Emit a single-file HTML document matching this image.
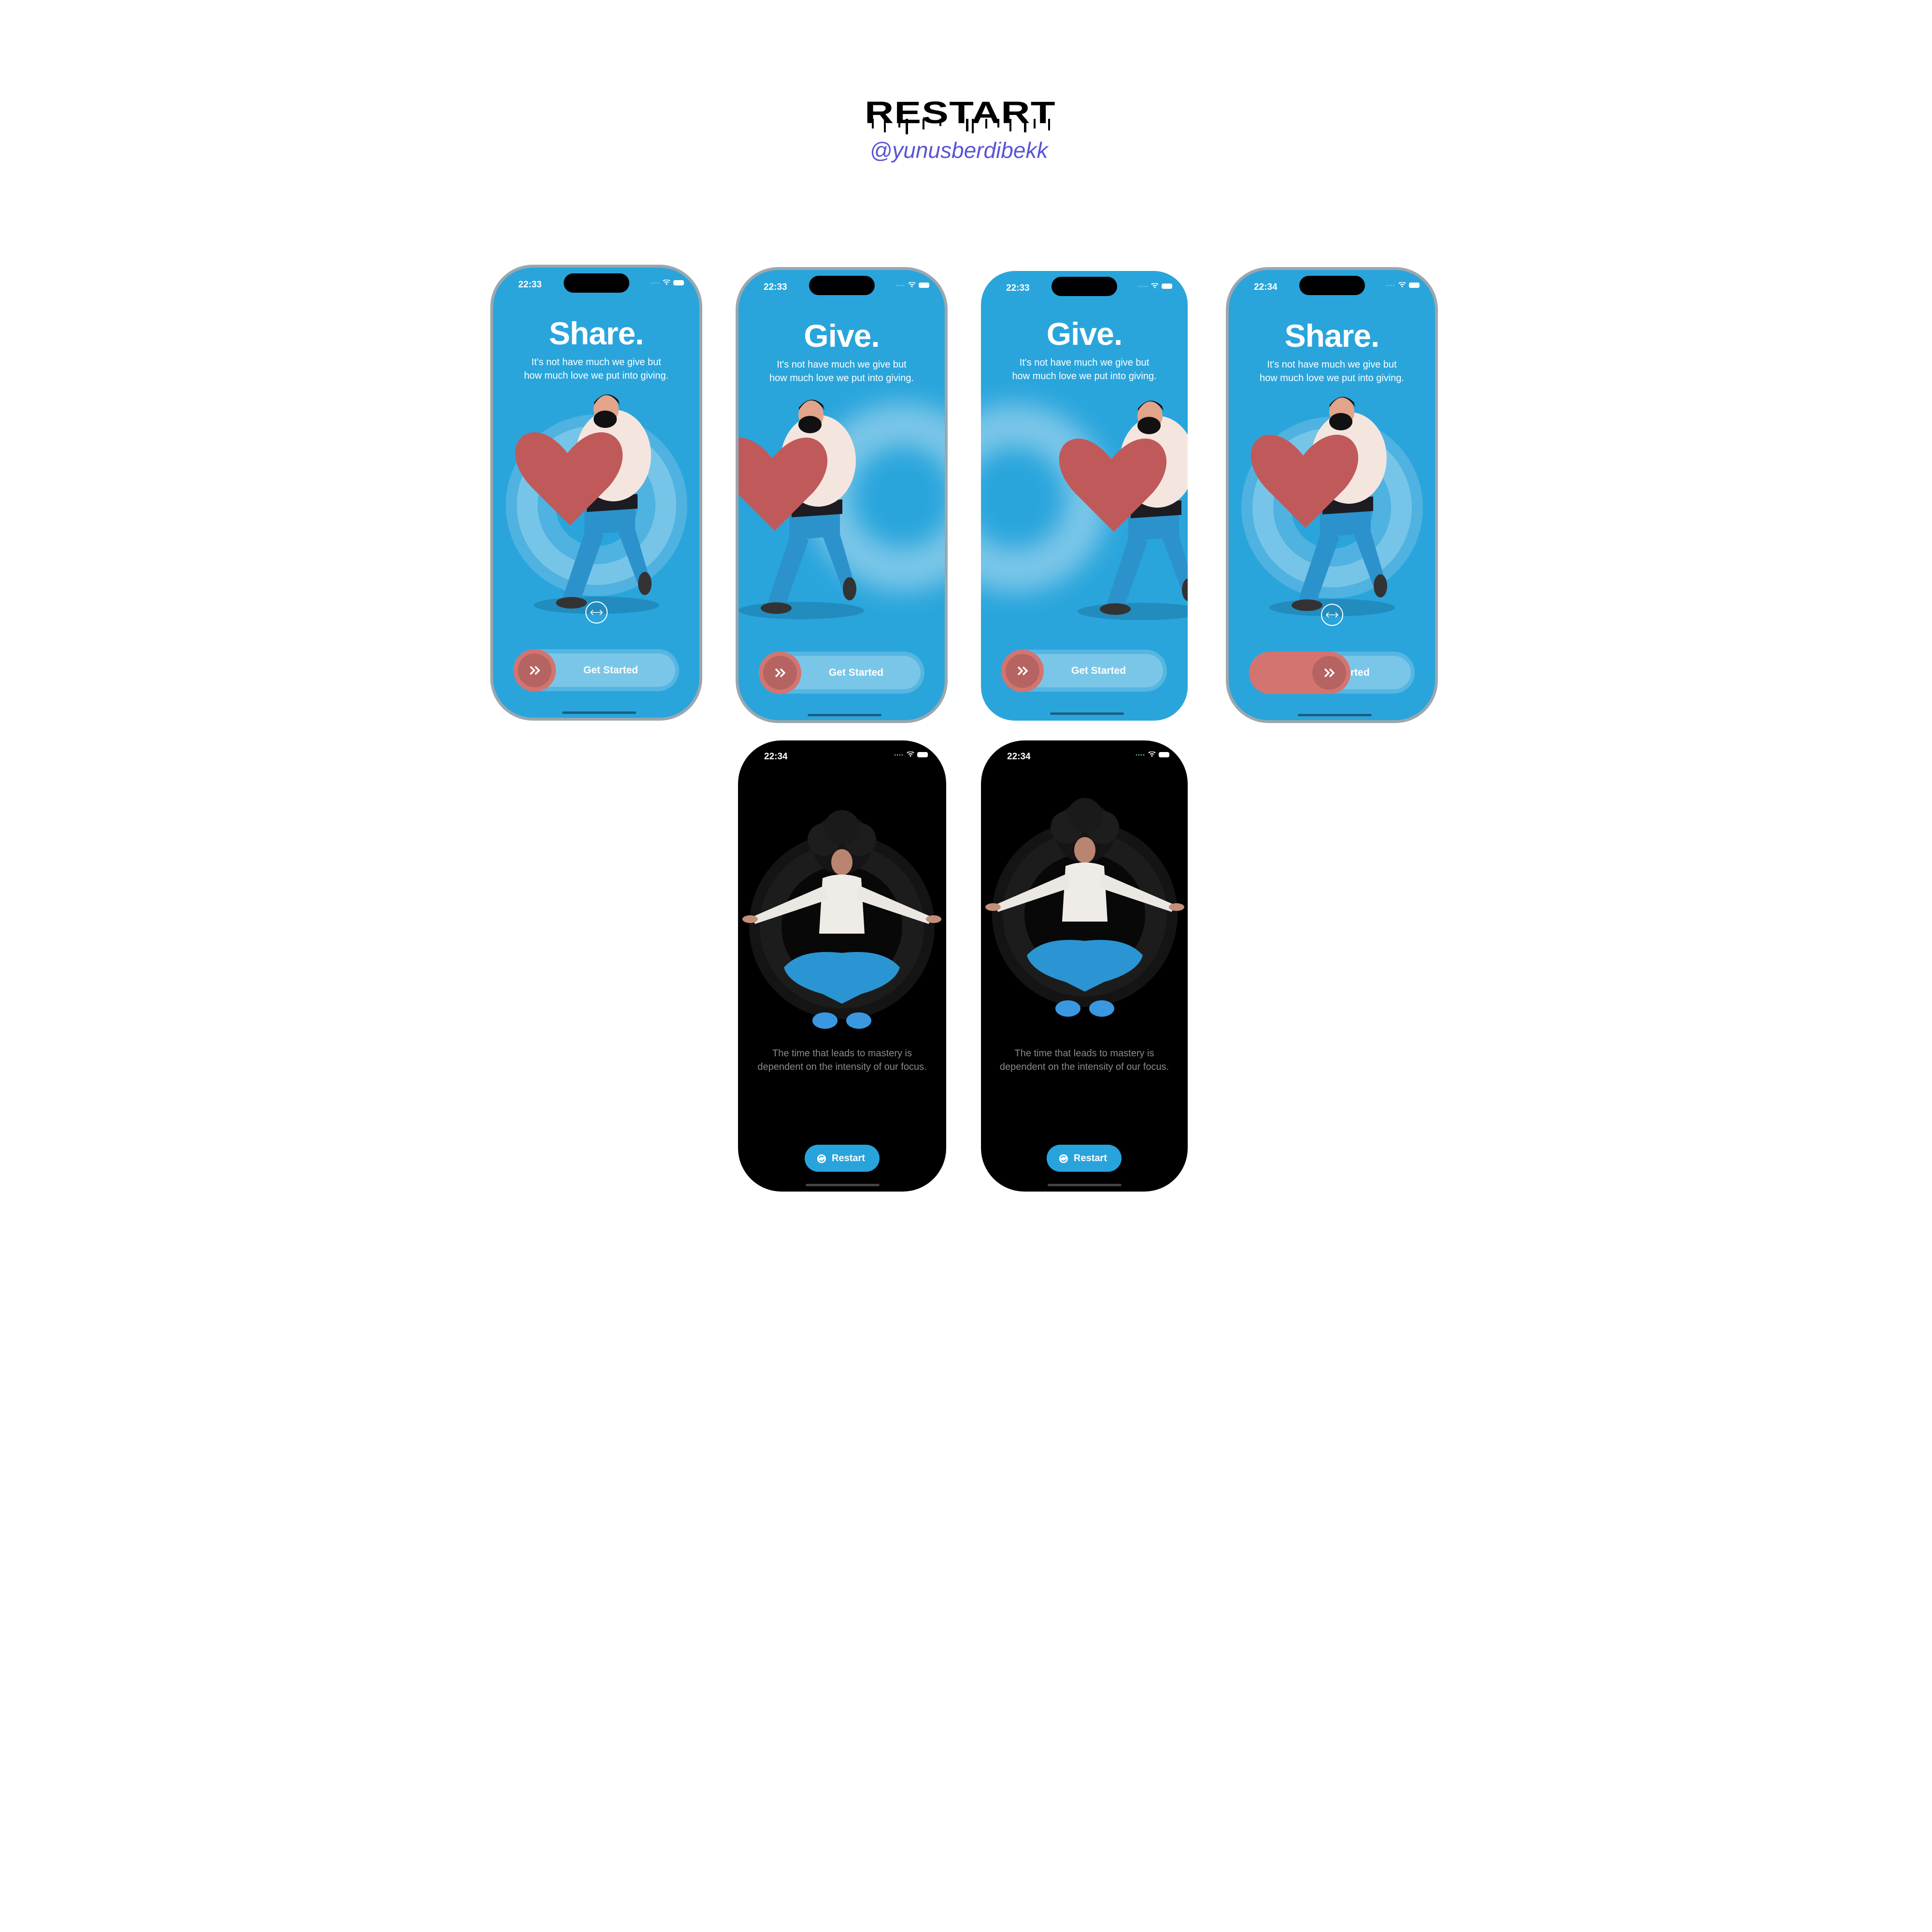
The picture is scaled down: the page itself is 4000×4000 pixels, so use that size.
<!DOCTYPE html>
<html><head><meta charset="utf-8"><style>
*{margin:0;padding:0;box-sizing:border-box}
body{width:4000px;height:4000px;background:#fff;position:relative;overflow:hidden;font-family:"Liberation Sans",sans-serif}
.abs{position:absolute}
.ph{position:absolute;width:439px;height:944px;border-radius:88px;background:#9aa7ae;padding:6px}
.scr{position:relative;width:100%;height:100%;border-radius:82px;background:#29a5dc;overflow:hidden}
.time{position:absolute;left:52px;top:25px;font-size:19px;font-weight:bold;color:#fff}
.isl{position:absolute;left:146px;top:12px;width:136px;height:40px;border-radius:20px;background:#000}
.stat{position:absolute;right:30px;top:25px}
.ttl{position:absolute;left:0;right:0;top:98px;text-align:center;color:#fff;font-weight:bold;font-size:66px;letter-spacing:-1px}
.sub{position:absolute;left:0;right:0;top:182px;text-align:center;color:#fff;font-size:20px;line-height:28px}
.track{position:absolute;left:42px;top:790px;width:343px;height:87px;border-radius:44px;background:#56b6e2}
.track i{position:absolute;left:8px;right:8px;top:9px;bottom:9px;border-radius:36px;background:#7ac6e8}
.gs{position:absolute;left:80px;right:20px;top:0;line-height:87px;text-align:center;color:#fff;font-weight:bold;font-size:21px}
.knob{position:absolute;width:88px;height:88px;border-radius:50%;background:#d47470;top:790px}
.knob b{position:absolute;left:9px;top:9px;width:70px;height:70px;border-radius:50%;background:#b56462}
.home{position:absolute;left:143px;top:919px;width:153px;height:5px;border-radius:3px;background:#1d5e80}
</style></head><body>

<div class="abs" style="left:1793px;top:196px;width:390px;text-align:center;font-size:64px;font-weight:900;color:#000;transform:scaleX(1.3);transform-origin:center;letter-spacing:1px">RESTART</div>
<svg class="abs" style="left:1800px;top:246px" width="380" height="35"><g fill="#000">
<rect x="5" y="0" width="4" height="20"/><rect x="30" y="0" width="4" height="28"/><rect x="60" y="0" width="4" height="18"/><rect x="75" y="0" width="5" height="32"/><rect x="110" y="0" width="4" height="22"/><rect x="145" y="0" width="4" height="15"/><rect x="200" y="0" width="5" height="26"/><rect x="212" y="0" width="4" height="30"/><rect x="240" y="0" width="4" height="20"/><rect x="265" y="0" width="4" height="18"/><rect x="290" y="0" width="4" height="26"/><rect x="320" y="0" width="5" height="28"/><rect x="340" y="0" width="4" height="20"/><rect x="370" y="0" width="4" height="24"/></g></svg>
<div class="abs" style="left:1795px;top:284px;width:380px;text-align:center;font-size:46px;font-style:italic;color:#5a55d6;letter-spacing:0px">@yunusberdibekk</div>

<svg width="0" height="0" style="position:absolute"><defs>
<filter id="bl" x="-60%" y="-60%" width="220%" height="220%"><feGaussianBlur stdDeviation="25"/></filter>
<g id="man">
<ellipse cx="220" cy="705" rx="130" ry="18" fill="#1a6f9a" opacity=".45"/>
<path d="M200 540 L150 690 L185 700 L235 560Z" fill="#2c92cc"/>
<path d="M260 540 L305 660 L330 650 L295 530Z" fill="#2c92cc"/>
<ellipse cx="168" cy="700" rx="32" ry="12" fill="#333"/>
<ellipse cx="320" cy="660" rx="14" ry="24" fill="#333"/>
<path d="M195 490 L300 490 L300 550 L195 560Z" fill="#2c92cc"/>
<path d="M200 480 L305 475 L305 505 L200 512Z" fill="#1c1c22"/>
<ellipse cx="255" cy="395" rx="78" ry="95" fill="#f4e6df"/>
<ellipse cx="240" cy="300" rx="26" ry="30" fill="#e2a48a"/>
<ellipse cx="238" cy="320" rx="24" ry="18" fill="#111"/>
<path d="M215 290 Q240 250 268 290 L265 280 Q240 255 215 285Z" fill="#111"/>
<path d="M160 415 C85 320 5 400 85 485 L165 565 L245 485 C320 400 235 320 160 415Z" transform="translate(0,-25)" fill="#c05a5a"/>
</g>
<g id="cc"><circle r="22" fill="none" stroke="#fff" stroke-width="2"/><path d="M-12 0H12M-7 -5L-12 0L-7 5M7 -5L12 0L7 5" stroke="#fff" stroke-width="1.6" fill="none"/></g>
<g id="st"><circle cx="0" cy="0" r="1.3" fill="#7ccbe9"/><circle cx="5" cy="0" r="1.3" fill="#7ccbe9"/><circle cx="10" cy="0" r="1.3" fill="#7ccbe9"/><circle cx="15" cy="0" r="1.3" fill="#7ccbe9"/>
<path d="M25 -4 A10 10 0 0 1 39 -4 M28 -1 A6 6 0 0 1 36 -1" stroke="#fff" stroke-width="2" fill="none"/><circle cx="32" cy="2" r="1.6" fill="#fff"/>
<rect x="46" y="-6" width="22" height="11" rx="3.5" fill="#fff"/></g>
<g id="chev"><path d="M3 3l8 8-8 8M13 3l8 8-8 8" stroke="#fff" stroke-width="3.5" fill="none"/></g>
</defs></svg>

<!-- phone 1 -->
<div class="ph" style="left:1015px;top:548px"><div class="scr">
<div class="time">22:33</div><div class="isl"></div><svg class="stat" width="72" height="14"><use href="#st" x="2" y="7"/></svg>
<div class="ttl">Share.</div><div class="sub">It's not have much we give but<br>how much love we put into giving.</div>
<svg class="abs" style="left:0;top:0" width="427" height="932"><circle cx="214" cy="492" r="188" fill="#4fb2e0"/><circle cx="214" cy="492" r="165" fill="#76c5e8"/><circle cx="214" cy="492" r="122" fill="#4fb2e0"/><circle cx="214" cy="492" r="85" fill="#29a5dc"/><use href="#man" x="-6" y="-6"/><use href="#cc" x="214" y="714"/></svg>
<div class="track"><i></i><div class="gs">Get Started</div></div><div class="knob" style="left:42px"><b></b><svg class="abs" style="left:32px;top:33px" width="26" height="22"><use href="#chev"/></svg></div>
<div class="home"></div></div></div>

<!-- phone 2 -->
<div class="ph" style="left:1523px;top:553px"><div class="scr">
<div class="time">22:33</div><div class="isl"></div><svg class="stat" width="72" height="14"><use href="#st" x="2" y="7"/></svg>
<div class="ttl">Give.</div><div class="sub">It's not have much we give but<br>how much love we put into giving.</div>
<svg class="abs" style="left:0;top:0" width="427" height="932"><circle cx="340" cy="470" r="150" fill="none" stroke="#7ac6e8" stroke-width="90" filter="url(#bl)"/><use href="#man" x="-90" y="0"/></svg>
<div class="track"><i></i><div class="gs">Get Started</div></div><div class="knob" style="left:42px"><b></b><svg class="abs" style="left:32px;top:33px" width="26" height="22"><use href="#chev"/></svg></div>
<div class="home"></div></div></div>

<!-- phone 3 -->
<div class="ph" style="left:2031px;top:561px;width:428px;height:931px;padding:0;background:transparent"><div class="scr" style="border-radius:70px">
<div class="time">22:33</div><div class="isl" style="left:146px"></div><svg class="stat" width="72" height="14"><use href="#st" x="2" y="7"/></svg>
<div class="ttl" style="top:92px">Give.</div><div class="sub" style="top:176px">It's not have much we give but<br>how much love we put into giving.</div>
<svg class="abs" style="left:0;top:0" width="428" height="931"><circle cx="70" cy="470" r="150" fill="none" stroke="#7ac6e8" stroke-width="90" filter="url(#bl)"/><use href="#man" x="110" y="0"/></svg>
<div class="track" style="top:784px"><i></i><div class="gs">Get Started</div></div><div class="knob" style="left:42px;top:784px"><b></b><svg class="abs" style="left:32px;top:33px" width="26" height="22"><use href="#chev"/></svg></div>
<div class="home" style="top:914px"></div></div></div>

<!-- phone 4 -->
<div class="ph" style="left:2538px;top:553px"><div class="scr">
<div class="time">22:34</div><div class="isl"></div><svg class="stat" width="72" height="14"><use href="#st" x="2" y="7"/></svg>
<div class="ttl">Share.</div><div class="sub">It's not have much we give but<br>how much love we put into giving.</div>
<svg class="abs" style="left:0;top:0" width="427" height="932"><circle cx="214" cy="492" r="188" fill="#4fb2e0"/><circle cx="214" cy="492" r="165" fill="#76c5e8"/><circle cx="214" cy="492" r="122" fill="#4fb2e0"/><circle cx="214" cy="492" r="85" fill="#29a5dc"/><use href="#man" x="-6" y="-6"/><use href="#cc" x="214" y="714"/></svg>
<div class="track"><i></i><div class="gs" style="text-align:left;left:210px">rted</div></div>
<div class="abs" style="left:42px;top:790px;width:210px;height:88px;border-radius:44px;background:#d47470"></div>
<div class="knob" style="left:164px"><b></b><svg class="abs" style="left:32px;top:33px" width="26" height="22"><use href="#chev"/></svg></div>
<div class="home"></div></div></div>

<!-- black phones -->
<svg width="0" height="0" style="position:absolute"><defs>
<g id="med">
<circle cx="215" cy="385" r="192" fill="#141414"/><circle cx="215" cy="385" r="170" fill="#1c1c1c"/><circle cx="215" cy="385" r="125" fill="#080808"/>
<circle cx="215" cy="215" r="62" fill="#151515"/><circle cx="178" cy="205" r="34" fill="#1d1d1d"/><circle cx="252" cy="205" r="34" fill="#1d1d1d"/><circle cx="215" cy="180" r="36" fill="#1a1a1a"/>
<ellipse cx="215" cy="252" rx="22" ry="27" fill="#b98571"/>
<path d="M175 285 Q215 270 255 285 L262 400 L168 400Z" fill="#efece7"/>
<path d="M180 300 L30 365 L35 380 L185 330Z" fill="#ebe8e3"/><path d="M250 300 L400 365 L395 380 L245 330Z" fill="#ebe8e3"/>
<ellipse cx="25" cy="370" rx="16" ry="8" fill="#c38e7a"/><ellipse cx="405" cy="370" rx="16" ry="8" fill="#c38e7a"/>
<path d="M95 470 Q130 430 215 440 Q300 430 335 470 Q325 505 255 525 L215 545 L175 525 Q105 505 95 470Z" fill="#2a95d2"/>
<ellipse cx="180" cy="580" rx="26" ry="17" fill="#3a98e0"/><ellipse cx="250" cy="580" rx="26" ry="17" fill="#3a98e0"/>
</g></defs></svg>

<div class="abs" style="left:1528px;top:1533px;width:431px;height:934px;border-radius:90px;background:#000;overflow:hidden">
<div class="time" style="left:54px;top:23px">22:34</div><svg class="stat" style="right:36px;top:23px" width="72" height="14"><use href="#st" x="2" y="7"/></svg>
<svg class="abs" style="left:0;top:0" width="431" height="934"><use href="#med"/></svg>
<div class="abs" style="left:0;right:0;top:634px;text-align:center;color:#8a8a8a;font-size:20px;line-height:28px">The time that leads to mastery is<br>dependent on the intensity of our focus.</div>
<div class="abs" style="left:138px;top:837px;width:155px;height:56px;border-radius:28px;background:#29a3dc;color:#fff;font-weight:bold;font-size:20px;line-height:56px;padding-left:56px">Restart</div>
<svg class="abs" style="left:163px;top:856px" width="20" height="20"><circle cx="10" cy="10" r="9" fill="#fff"/><path d="M5 9a5 5 0 0 1 9-2M15 11a5 5 0 0 1-9 2" stroke="#29a3dc" stroke-width="2" fill="none"/></svg>
<div class="abs" style="left:140px;top:918px;width:153px;height:5px;border-radius:3px;background:#444"></div>
</div>

<div class="abs" style="left:2031px;top:1533px;width:428px;height:934px;border-radius:90px;background:#000;overflow:hidden">
<div class="time" style="left:54px;top:23px">22:34</div><svg class="stat" style="right:36px;top:23px" width="72" height="14"><use href="#st" x="2" y="7"/></svg>
<svg class="abs" style="left:0;top:0" width="428" height="934"><use href="#med" y="-25"/></svg>
<div class="abs" style="left:0;right:0;top:634px;text-align:center;color:#8a8a8a;font-size:20px;line-height:28px">The time that leads to mastery is<br>dependent on the intensity of our focus.</div>
<div class="abs" style="left:136px;top:837px;width:155px;height:56px;border-radius:28px;background:#29a3dc;color:#fff;font-weight:bold;font-size:20px;line-height:56px;padding-left:56px">Restart</div>
<svg class="abs" style="left:161px;top:856px" width="20" height="20"><circle cx="10" cy="10" r="9" fill="#fff"/><path d="M5 9a5 5 0 0 1 9-2M15 11a5 5 0 0 1-9 2" stroke="#29a3dc" stroke-width="2" fill="none"/></svg>
<div class="abs" style="left:138px;top:918px;width:153px;height:5px;border-radius:3px;background:#444"></div>
</div>

</body></html>
